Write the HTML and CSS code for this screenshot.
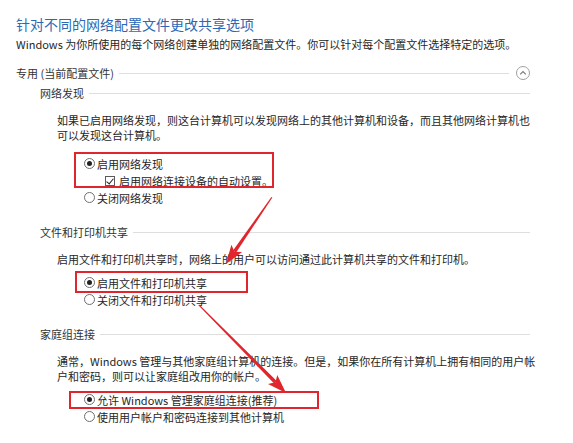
FILE: index.html
```html
<!DOCTYPE html>
<html lang="zh-CN">
<head>
    <meta charset="UTF-8">
    <meta name="viewport" content="width=device-width, initial-scale=1.0">
    <title>高级共享设置</title>
    <link rel="stylesheet" href="styles.css">
</head>
<body>
    <div class="page">
        <h1 class="title">针对不同的网络配置文件更改共享选项</h1>
        <p class="intro">Windows 为你所使用的每个网络创建单独的网络配置文件。你可以针对每个配置文件选择特定的选项。</p>

        <div class="profile-head">
            <span>专用 (当前配置文件)</span>
            <span class="rule"></span>
            <span class="toggle">
                <svg width="14" height="14" viewBox="0 0 14 14">
                    <circle cx="7" cy="7" r="6.5" fill="none" stroke="#a0a0a0" stroke-width="1"/>
                    <path d="M4.2 8.4 L7 5.6 L9.8 8.4" fill="none" stroke="#7a7a7a" stroke-width="1.2"/>
                </svg>
            </span>
        </div>

        <div class="profile">
            <section class="group">
                <div class="group-head"><span>网络发现</span><span class="rule"></span></div>
                <p class="group-text">如果已启用网络发现，则这台计算机可以发现网络上的其他计算机和设备，而且其他网络计算机也<br>可以发现这台计算机。</p>
                <div class="options options-first">
                    <div class="option"><span class="radio checked"></span>启用网络发现</div>
                    <div class="option sub"><span class="check"></span>启用网络连接设备的自动设置。</div>
                    <div class="option"><span class="radio"></span>关闭网络发现</div>
                </div>
            </section>

            <section class="group">
                <div class="group-head"><span>文件和打印机共享</span><span class="rule"></span></div>
                <p class="group-text">启用文件和打印机共享时，网络上的用户可以访问通过此计算机共享的文件和打印机。</p>
                <div class="options">
                    <div class="option"><span class="radio checked"></span>启用文件和打印机共享</div>
                    <div class="option"><span class="radio"></span>关闭文件和打印机共享</div>
                </div>
            </section>

            <section class="group">
                <div class="group-head"><span>家庭组连接</span><span class="rule"></span></div>
                <p class="group-text">通常，Windows 管理与其他家庭组计算机的连接。但是，如果你在所有计算机上拥有相同的用户帐<br>户和密码，则可以让家庭组改用你的帐户。</p>
                <div class="options">
                    <div class="option"><span class="radio checked"></span>允许 Windows 管理家庭组连接(推荐)</div>
                    <div class="option"><span class="radio"></span>使用用户帐户和密码连接到其他计算机</div>
                </div>
            </section>
        </div>
    </div>

    <!-- red annotations drawn over the screenshot -->
    <svg class="marks" width="573" height="443" viewBox="0 0 573 443">
        <g fill="none" stroke="#e0262c" stroke-width="2">
            <rect x="75" y="153" width="198" height="34"/>
            <rect x="76" y="272" width="171" height="20"/>
            <rect x="70" y="392" width="248" height="16"/>
        </g>
        <g fill="#e0262c">
            <g transform="translate(226 264) rotate(124.5)">
                <polygon points="-81,-0.6 -15,-1.8 -15,1.8 -81,0.6"/>
                <polygon points="0,0 -19,-6.5 -15,0 -19,6.5"/>
            </g>
            <g transform="translate(286 393) rotate(45.3)">
                <polygon points="-124,-0.6 -15,-1.8 -15,1.8 -124,0.6"/>
                <polygon points="0,0 -19,-6.5 -15,0 -19,6.5"/>
            </g>
        </g>
    </svg>
</body>
</html>
```

FILE: styles.css
```css
/* General Styles */
body {
    margin: 0;
    position: relative;
    background: #ffffff;
    color: #262626;
    font-family: "Noto Sans CJK SC", "Noto Sans", sans-serif;
    font-size: 11px;
}

.page {
    padding: 15px 43px 0 16px;
}

.title {
    margin: 0;
    font-size: 14px;
    line-height: 18px;
    font-weight: 400;
    color: #2d68b4; /* Windows blue heading */
}

.intro {
    margin: 3px 0 0;
    line-height: 16px;
    white-space: nowrap;
}

/* Section headers with a rule */
.profile-head,
.group-head {
    display: flex;
    align-items: center;
    height: 16px;
    color: #333;
}

.profile-head {
    margin-top: 13px;
}

.rule {
    flex: 1;
    height: 1px;
    margin-left: 5px;
    background: #dedede;
}

.toggle {
    display: flex;
    margin-left: 7px;
}

.profile {
    padding: 4px 0 0 24px;
}

.group + .group {
    margin-top: 18px;
}

.group-text {
    margin: 12px 0 0;
    padding-left: 17px;
    line-height: 15px;
    white-space: nowrap; /* lines are broken by hand */
}

/* Radio and checkbox rows */
.options {
    margin: 7px 0 0 44px;
}

.options-first {
    margin-top: 12px;
}

.option {
    display: flex;
    align-items: center;
    height: 17px;
    gap: 2px;
    white-space: nowrap;
}

.option.sub {
    padding-left: 21px;
    gap: 4px;
}

.radio {
    position: relative;
    width: 11px;
    height: 11px;
    box-sizing: border-box;
    border: 1px solid #6e6e6e;
    border-radius: 50%;
    background: #fff;
}

.radio.checked::after {
    content: "";
    position: absolute;
    left: 2px;
    top: 2px;
    width: 5px;
    height: 5px;
    border-radius: 50%;
    background: #222;
}

.check {
    position: relative;
    width: 10px;
    height: 10px;
    box-sizing: border-box;
    border: 1px solid #5a5a5a;
    background: #fff;
}

.check::after {
    content: "";
    position: absolute;
    left: 2px;
    top: 0;
    width: 3px;
    height: 6px;
    border-right: 1px solid #222;
    border-bottom: 1px solid #222;
    transform: rotate(40deg);
}

.marks {
    position: absolute;
    top: 0;
    left: 0;
    pointer-events: none;
}
```
